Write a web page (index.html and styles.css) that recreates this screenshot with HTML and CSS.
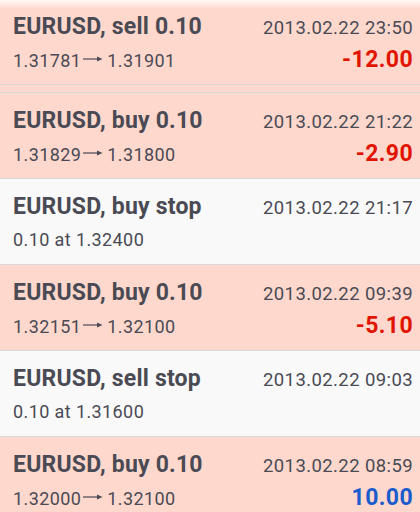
FILE: index.html
```html
<!DOCTYPE html>
<html>
<head>
<meta charset="utf-8">
<link rel="stylesheet" href="styles.css">
</head>
<body>
<div class="list">
  <div class="row loss first">
    <div class="line1"><span class="title">EURUSD, sell 0.10</span><span class="date">2013.02.22 23:50</span></div>
    <div class="line2"><span class="sub">1.31781<svg class="arrow" width="20" height="8" viewBox="0 0 20 8"><line x1="0" y1="4" x2="16" y2="4" stroke="#4a4a54" stroke-width="1.2"/><path d="M14 1.5 L19.5 4 L14 6.5 Z" fill="#4a4a54"/></svg>1.31901</span><span class="profit neg">-12.00</span></div>
  </div>
  <div class="gap"></div>
  <div class="row loss">
    <div class="line1"><span class="title">EURUSD, buy 0.10</span><span class="date">2013.02.22 21:22</span></div>
    <div class="line2"><span class="sub">1.31829<svg class="arrow" width="20" height="8" viewBox="0 0 20 8"><line x1="0" y1="4" x2="16" y2="4" stroke="#4a4a54" stroke-width="1.2"/><path d="M14 1.5 L19.5 4 L14 6.5 Z" fill="#4a4a54"/></svg>1.31800</span><span class="profit neg">-2.90</span></div>
  </div>
  <div class="row order">
    <div class="line1"><span class="title">EURUSD, buy stop</span><span class="date">2013.02.22 21:17</span></div>
    <div class="line2"><span class="sub">0.10 at 1.32400</span></div>
  </div>
  <div class="row loss">
    <div class="line1"><span class="title">EURUSD, buy 0.10</span><span class="date">2013.02.22 09:39</span></div>
    <div class="line2"><span class="sub">1.32151<svg class="arrow" width="20" height="8" viewBox="0 0 20 8"><line x1="0" y1="4" x2="16" y2="4" stroke="#4a4a54" stroke-width="1.2"/><path d="M14 1.5 L19.5 4 L14 6.5 Z" fill="#4a4a54"/></svg>1.32100</span><span class="profit neg">-5.10</span></div>
  </div>
  <div class="row order">
    <div class="line1"><span class="title">EURUSD, sell stop</span><span class="date">2013.02.22 09:03</span></div>
    <div class="line2"><span class="sub">0.10 at 1.31600</span></div>
  </div>
  <div class="row loss">
    <div class="line1"><span class="title">EURUSD, buy 0.10</span><span class="date">2013.02.22 08:59</span></div>
    <div class="line2"><span class="sub">1.32000<svg class="arrow" width="20" height="8" viewBox="0 0 20 8"><line x1="0" y1="4" x2="16" y2="4" stroke="#4a4a54" stroke-width="1.2"/><path d="M14 1.5 L19.5 4 L14 6.5 Z" fill="#4a4a54"/></svg>1.32100</span><span class="profit pos">10.00</span></div>
  </div>
</div>
</body>
</html>
```

FILE: styles.css
```css
html, body {
  margin: 0;
  padding: 0;
  background: #ffd8cd;
}
body {
  width: 420px;
  height: 512px;
  overflow: hidden;
  font-family: Roboto, "Liberation Sans", sans-serif;
  color: #4a4a54;
}
.list {
  position: relative;
  display: flex;
  flex-direction: column;
}
.list::before {
  content: "";
  position: absolute;
  left: 0;
  right: 0;
  top: 0;
  height: 9px;
  background: linear-gradient(to bottom, rgba(255,255,255,0.85), rgba(255,255,255,0));
}
.row {
  height: 86px;
  flex-shrink: 0;
  box-sizing: border-box;
  padding: 13px 7px 0 13px;
  border-bottom: 1px solid #d8d8d8;
}
.row.first {
  height: 85px;
  padding-top: 12px;
}
.gap {
  height: 8px;
  flex-shrink: 0;
  box-sizing: border-box;
  border-bottom: 1px solid #d8dadc;
  background: #ffd8cd;
}
.loss { background: #ffd8cd; }
.order { background: #f9f9f9; }
.line1, .line2 {
  display: flex;
  justify-content: space-between;
  align-items: baseline;
}
.line1 { height: 30px; line-height: 30px; }
.line2 { height: 36px; line-height: 34px; margin-top: 1px; }
.title {
  font-size: 23px;
  font-weight: bold;
  letter-spacing: 0.2px;
}
.date {
  font-size: 18.5px;
  letter-spacing: 0.4px;
}
.sub {
  font-size: 18px;
  letter-spacing: 0.4px;
}
.arrow {
  display: inline-block;
  vertical-align: 4px;
  margin: 0 4px 0 2px;
}
.profit {
  font-size: 23px;
  font-weight: bold;
  letter-spacing: 0.4px;
}
.neg { color: #e01400; }
.pos { color: #1a5ccc; }
```
